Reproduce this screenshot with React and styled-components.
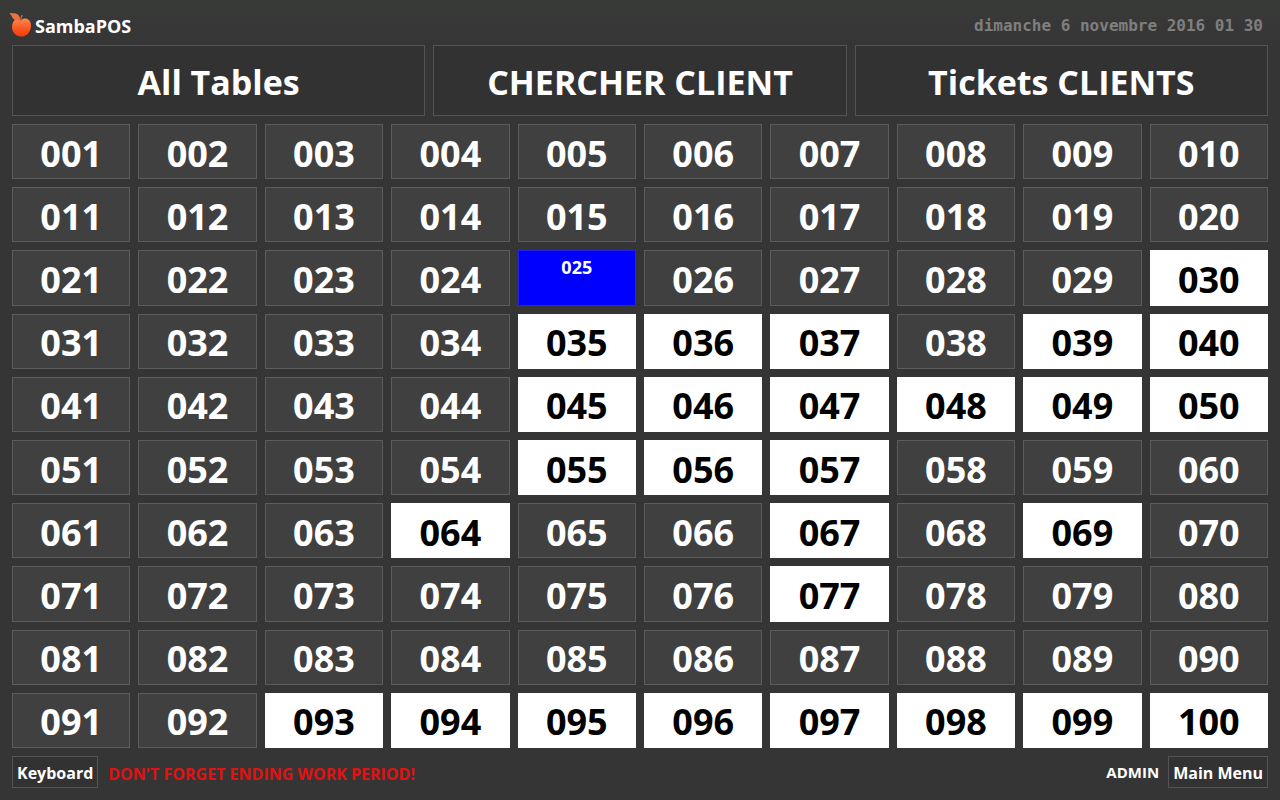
import React from "react";
import styled, { createGlobalStyle } from "styled-components";

const GlobalStyle = createGlobalStyle`
  * {
    box-sizing: border-box;
  }
  body {
    margin: 0;
    background: #363536;
    color: white;
    font-family: "Open Sans", "Noto Sans", sans-serif;
    font-weight: 700;
  }
  button {
    font-family: inherit;
    font-weight: inherit;
    cursor: pointer;
  }
`;

const Page = styled.div`
  min-height: 100vh;
  display: flex;
  flex-direction: column;
  gap: 8px;
  padding: 0 12px 12px;
  background: linear-gradient(#383a38, #363536 48px);
`;
const TopBar = styled.header`
  height: 37px;
  padding: 14px 5px 0 0;
  display: flex;
  align-items: center;
  justify-content: space-between;
`;
const Brand = styled.div`
  display: flex;
  align-items: center;
  gap: 3px;
  margin-left: -3px;
  font-size: 18px;
  line-height: 24px;
`;
const Clock = styled.time`
  color: #7f7f7f;
  font-family: "DejaVu Sans Mono", monospace;
  font-size: 16px;
  line-height: 24px;
`;
const Screens = styled.nav`
  display: grid;
  grid-template-columns: repeat(3, 1fr);
  gap: 8px;
`;
const ScreenButton = styled.button`
  height: 71px;
  padding: 2px 0 0;
  border: 1px solid #545454;
  background: #333233;
  color: white;
  font-size: 34px;
  line-height: 48px;
`;
const Tables = styled.main`
  flex: 1;
  display: grid;
  grid-template-columns: repeat(10, 1fr);
  grid-auto-rows: 1fr;
  gap: 8px;
`;

const colors = {
  free: { background: "#404040", border: "#5c5c5c", text: "white" },
  busy: { background: "white", border: "white", text: "black" },
  selected: { background: "#0000ff", border: "#2424e6", text: "white" },
};

const TableButton = styled.button`
  display: flex;
  justify-content: center;
  align-items: ${(props) =>
    props.$status === "selected" ? "flex-start" : "center"};
  padding: 4px 0 0;
  border: 1px solid ${(props) => colors[props.$status].border};
  background: ${(props) => colors[props.$status].background};
  color: ${(props) => colors[props.$status].text};
  font-size: ${(props) => (props.$status === "selected" ? "18px" : "36px")};
  line-height: ${(props) => (props.$status === "selected" ? "24px" : "48px")};
`;
const Footer = styled.footer`
  display: flex;
  align-items: center;
`;
const FooterButton = styled.button`
  height: 32px;
  padding: 2px 4px 0;
  border: 1px solid #545454;
  background: #333233;
  color: white;
  font-size: 16px;
  line-height: 24px;
`;
const Warning = styled.span`
  flex: 1;
  padding: 4px 0 0 10px;
  color: #e01212;
  font-size: 16px;
  line-height: 24px;
`;
const User = styled.span`
  margin-right: 9px;
  font-size: 15px;
  line-height: 24px;
`;

const busyTables = [
  30, 35, 36, 37, 39, 40, 45, 46, 47, 48, 49, 50, 55, 56, 57, 64, 67, 69, 77,
  93, 94, 95, 96, 97, 98, 99, 100,
];
const selectedTable = 25;
const tables = Array.from({ length: 100 }, (_, i) => i + 1);
const screens = ["All Tables", "CHERCHER CLIENT", "Tickets CLIENTS"];

const getStatus = (table) => {
  if (table === selectedTable) return "selected";
  return busyTables.includes(table) ? "busy" : "free";
};

function Logo() {
  return (
    <svg width="23" height="26" viewBox="0 0 23 26" aria-hidden="true">
      <defs>
        <linearGradient id="fruit" x1="0" y1="0" x2="0" y2="1">
          <stop offset="0" stopColor="#ff8a50" />
          <stop offset="0.5" stopColor="#fb5c26" />
          <stop offset="1" stopColor="#f23d08" />
        </linearGradient>
      </defs>
      <path
        d="M12 7C14 5.200 17.200 4.800 19.600 6.800c2.800 2.500 3.100 7 1.400 10.600-1.600 3.600-4.900 6.100-8.600 6.100-4.200 0-8-2.600-9-6.800C2.500 12.800 3.400 8.200 6.600 6.500c1.800-.9 3.800-.5 5.400.5z"
        fill="url(#fruit)"
      />
      <path
        d="M.3 0C2 .300 6.500-.200 8.800 1.400c2.200 1.600 2.400 4 2 6.100C7.500 8 4.900 7 3.700 5 2.700 3.300 2 1.500.3 0z"
        fill="#ee7040"
      />
      <path
        d="M12 8C11.700 5.600 12 3.700 13.300 2"
        fill="none"
        stroke="#d9602f"
        strokeWidth="1.500"
      />
    </svg>
  );
}

function App() {
  return (
    <>
      <GlobalStyle />
      <Page>
        <TopBar>
          <Brand>
            <Logo />
            SambaPOS
          </Brand>
          <Clock dateTime="2016-11-06T01:30">
            dimanche 6 novembre 2016 01 30
          </Clock>
        </TopBar>
        <Screens>
          {screens.map((name) => (
            <ScreenButton key={name}>{name}</ScreenButton>
          ))}
        </Screens>
        <Tables>
          {tables.map((table) => (
            <TableButton key={table} $status={getStatus(table)}>
              {String(table).padStart(3, "0")}
            </TableButton>
          ))}
        </Tables>
        <Footer>
          <FooterButton>Keyboard</FooterButton>
          <Warning>DON'T FORGET ENDING WORK PERIOD!</Warning>
          <User>ADMIN</User>
          <FooterButton>Main Menu</FooterButton>
        </Footer>
      </Page>
    </>
  );
}

export default App;
